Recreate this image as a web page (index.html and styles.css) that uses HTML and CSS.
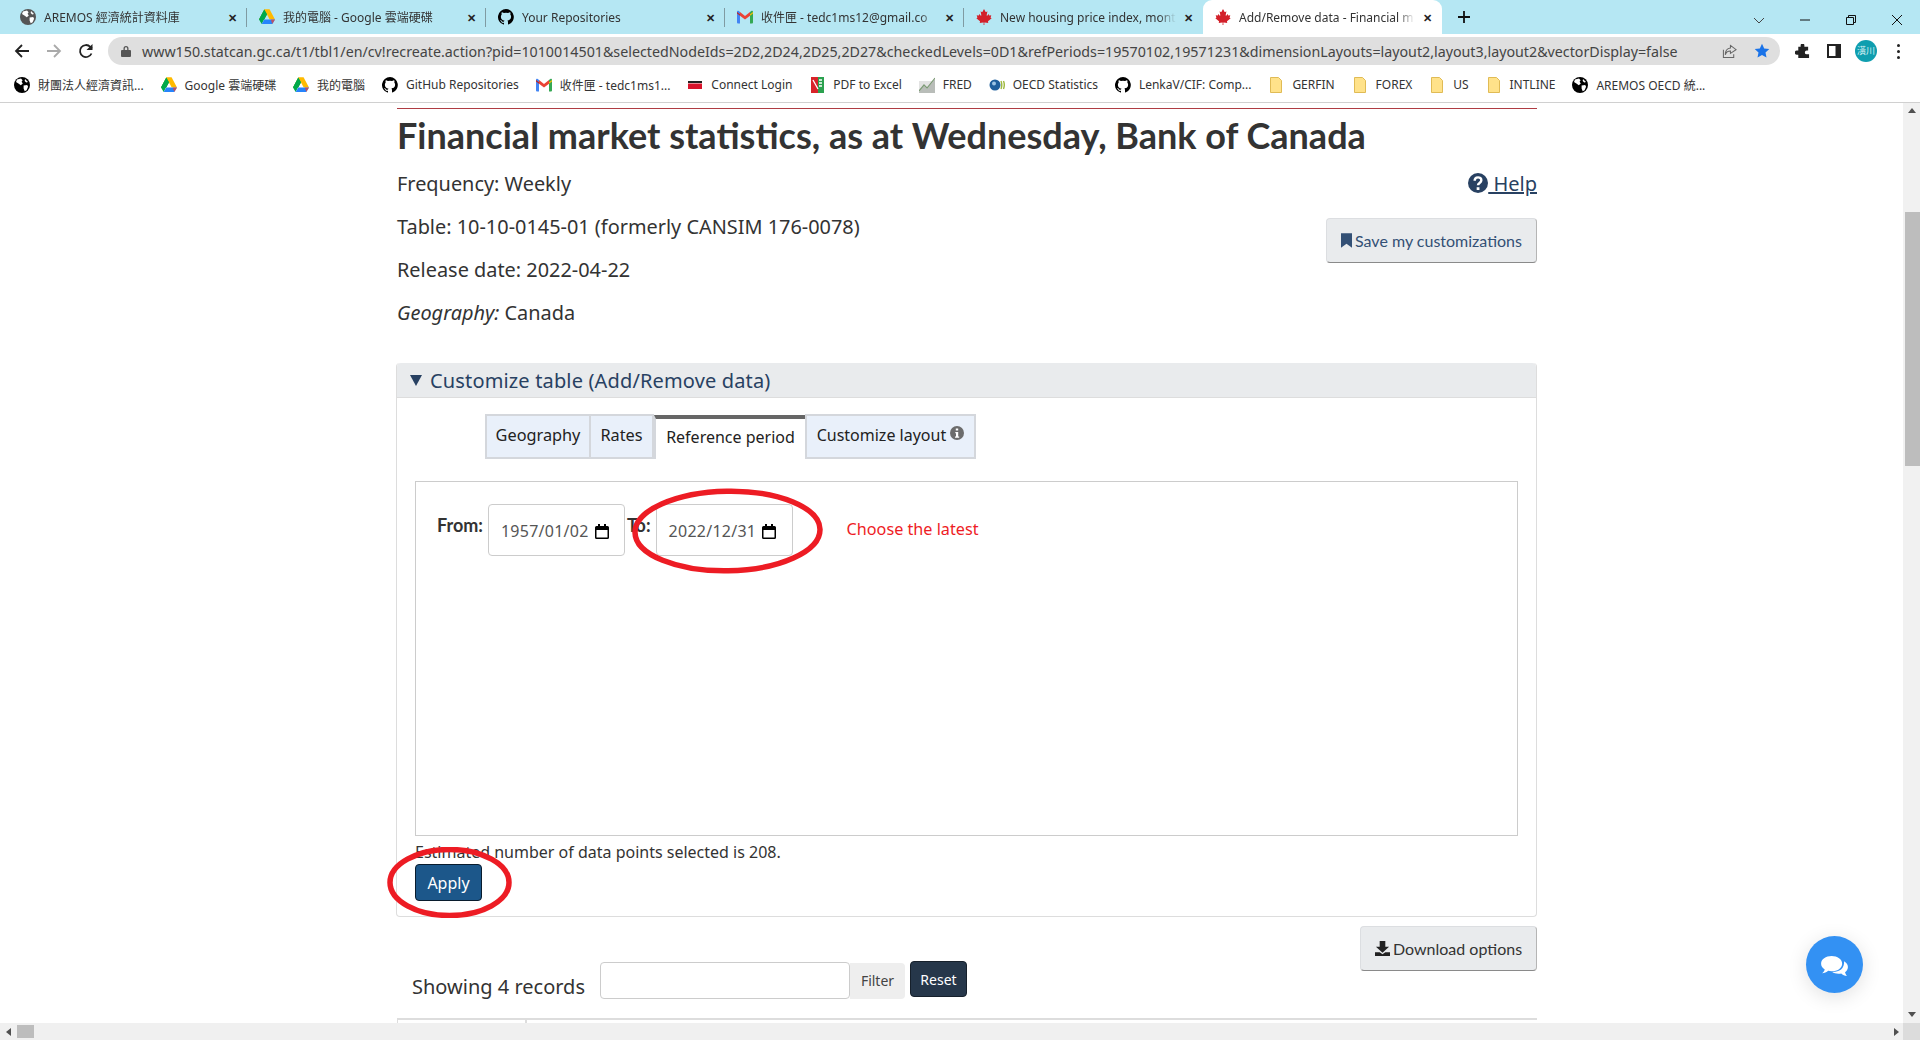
FILE: index.html

```html
<!DOCTYPE html>
<html lang="en">
<head>
    <meta charset="UTF-8">
    <title>Add/Remove data - Financial market statistics</title>
    <link rel="stylesheet" href="styles.css">
</head>
<body>
    <svg class="defs" width="0" height="0">
        <symbol id="globe" viewBox="0 0 16 16">
            <circle cx="8" cy="8" r="8"/>
            <path fill="#fff" d="M3 2.6 7 1.5l1.6 1.7-1 1.6 1.2 1.6-2 1.9-2.4-1.7L2 5zM9.6 8.6l3.6-.6.9 1.8-1.5 3.4-1.9 1-1.1-2.6zM11 1.9l3 3-1.8.5-1.5-1.4z"/>
        </symbol>
        <symbol id="drive" viewBox="0 0 16 15">
            <path fill="#ffba00" d="M5.3 0h5.4l-2.7 4.8-3 5.2H0z"/>
            <path fill="#00a94b" d="M5.3 0 8 4.7 5 10 2.7 14.6 0 10z"/>
            <path fill="#ffba00" d="M10.7 0 16 10h-5.3L5.4 0z"/>
            <path fill="#00a94b" d="M5.3 0 8 4.8 5.3 10H0z"/>
            <path fill="#2684fc" d="M5.3 10H16l-2.7 4.6H2.7z"/>
            <path fill="#ea4335" d="M13.3 14.6 16 10h-4.2z" opacity=".75"/>
        </symbol>
        <symbol id="github" viewBox="0 0 16 16">
            <path d="M8 0a8 8 0 0 0-2.5 15.6c.4.1.5-.2.5-.4v-1.4c-2.2.5-2.7-1-2.7-1-.4-.9-.9-1.2-.9-1.2-.7-.5.1-.5.1-.5.8.1 1.2.8 1.2.8.7 1.2 1.9.9 2.3.7.1-.5.3-.9.5-1.1-1.8-.2-3.6-.9-3.6-4 0-.9.3-1.6.8-2.1-.1-.2-.4-1 .1-2.1 0 0 .7-.2 2.2.8a7.600 7.600 0 0 1 4 0c1.500-1 2.200-.8 2.200-.8.500 1.100.200 1.900.100 2.100.500.600.800 1.300.800 2.100 0 3.100-1.900 3.700-3.700 3.900.300.300.600.800.600 1.500v2.200c0 .200.100.500.600.400A8 8 0 0 0 8 0z"/>
        </symbol>
        <symbol id="gmail" viewBox="0 0 16 13">
            <path fill="#4285f4" d="M0 1.500C0 .6.900 0 1.700.5L3 1.500V13H1a1 1 0 0 1-1-1z"/>
            <path fill="#34a853" d="M13 1.500 14.300.5c.8-.5 1.700.1 1.700 1V12a1 1 0 0 1-1 1h-2z"/>
            <path fill="#ea4335" d="M3 1.500 8 5.400l5-3.900v3.700L8 9 3 5.200z"/>
            <path fill="#c5221f" d="M0 1.500 3 3.800v1.400L0 3z"/>
            <path fill="#fbbc04" d="m16 1.500-3 2.300v1.400L16 3z"/>
        </symbol>
        <symbol id="leaf" viewBox="0 0 16 16">
            <path fill="#d3202a" d="M8 0 6.500 2.800c-.2.300-.5.300-.8.100L4.600 2.300l.7 3.800c.1.600-.3.800-.7.400L3.200 5l-.3 1.300c0 .2-.2.300-.4.300L.7 6.200l.6 2c.1.400 0 .6-.3.700l-.7.300 3.400 2.800c.3.300.4.500.3.900l-.3 1 3.500-.4c.3 0 .5.100.5.400l-.2 2.500h1l-.2-2.500c0-.3.200-.4.500-.4l3.500.4-.3-1c-.1-.4 0-.6.300-.9l3.400-2.800-.7-.3c-.3-.1-.4-.3-.3-.7l.6-2-1.800.4c-.2 0-.4-.1-.4-.3L12.800 5l-1.400 1.500c-.4.400-.8.200-.7-.4l.7-3.800-1.100.6c-.3.200-.6.200-.8-.1z"/>
        </symbol>
        <symbol id="folder" viewBox="0 0 12 16">
            <path fill="#ffe28a" stroke="#e0bb55" d="M.5.5h8l3 3v12H.5z"/>
        </symbol>
        <symbol id="calendar" viewBox="0 0 14 15">
            <path d="M3 0h2v2h4V0h2v2h1.500A1.500 1.500 0 0 1 14 3.500v10a1.500 1.500 0 0 1-1.500 1.500h-11A1.500 1.500 0 0 1 0 13.500v-10A1.500 1.500 0 0 1 1.500 2H3zM1.500 6v7.500h11V6z"/>
        </symbol>
    </svg>

    <div class="tabstrip">
        <div class="tab"><svg class="tab-icon globe-gray"><use href="#globe"/></svg><span class="tab-title">AREMOS 經濟統計資料庫</span><span class="tab-close">✕</span></div>
        <div class="tab"><svg class="tab-icon"><use href="#drive"/></svg><span class="tab-title">我的電腦 - Google 雲端硬碟</span><span class="tab-close">✕</span></div>
        <div class="tab"><svg class="tab-icon"><use href="#github"/></svg><span class="tab-title">Your Repositories</span><span class="tab-close">✕</span></div>
        <div class="tab"><svg class="tab-icon"><use href="#gmail"/></svg><span class="tab-title">收件匣 - tedc1ms12@gmail.co</span><span class="tab-close">✕</span></div>
        <div class="tab tab-before-active"><svg class="tab-icon"><use href="#leaf"/></svg><span class="tab-title">New housing price index, mont</span><span class="tab-close">✕</span></div>
        <div class="tab tab-active"><svg class="tab-icon"><use href="#leaf"/></svg><span class="tab-title">Add/Remove data - Financial m</span><span class="tab-close">✕</span></div>
        <svg class="new-tab" viewBox="0 0 14 14"><path d="M7 1v12M1 7h12" stroke="#111" stroke-width="1.800"/></svg>
        <div class="window-controls">
            <svg viewBox="0 0 12 12"><path d="M1 4l5 5 5-5" fill="none" stroke="#444"/></svg>
            <svg viewBox="0 0 12 12"><path d="M1 6h10" stroke="#111"/></svg>
            <svg viewBox="0 0 12 12"><path d="M1.500 3.500h7v7h-7zM3.500 3.500v-2h7v7h-2" fill="none" stroke="#111"/></svg>
            <svg viewBox="0 0 12 12"><path d="M1 1l10 10M11 1 1 11" stroke="#111"/></svg>
        </div>
    </div>

    <div class="toolbar">
        <svg class="nav-icon" viewBox="0 0 16 16"><path d="M15 8H2M8 2 2 8l6 6" fill="none" stroke="#222" stroke-width="1.800"/></svg>
        <svg class="nav-icon" viewBox="0 0 16 16"><path d="M1 8h13M8 2l6 6-6 6" fill="none" stroke="#aaa" stroke-width="1.800"/></svg>
        <svg class="nav-icon" viewBox="0 0 16 16"><path d="M13.500 10.500A6 6 0 1 1 12.300 3.800L14 5.500" fill="none" stroke="#222" stroke-width="1.800"/><path d="M14.500 1v6h-6z" fill="#222"/></svg>
        <div class="omnibox">
            <svg class="lock" viewBox="0 0 10 12"><path d="M2.500 5V3.500a2.500 2.500 0 0 1 5 0V5H9a1 1 0 0 1 1 1v5a1 1 0 0 1-1 1H1a1 1 0 0 1-1-1V6a1 1 0 0 1 1-1zM3.800 5h2.400V3.500a1.200 1.200 0 0 0-2.400 0z" fill="#555"/></svg>
            <span class="url">www150.statcan.gc.ca/t1/tbl1/en/cv!recreate.action?pid=1010014501&amp;selectedNodeIds=2D2,2D24,2D25,2D27&amp;checkedLevels=0D1&amp;refPeriods=19570102,19571231&amp;dimensionLayouts=layout2,layout3,layout2&amp;vectorDisplay=false</span>
            <svg class="share" viewBox="0 0 16 16"><path d="M9 1.500 15 6l-6 4V7.500C6 7.500 4.300 9 3.500 11.500 3.500 7.500 5.500 4.700 9 4.300zM1.500 6v8.500h11V11" fill="none" stroke="#666" stroke-width="1.100"/></svg>
            <svg class="star" viewBox="0 0 16 16"><path d="m8 .8 2.200 4.700 5.100.6-3.800 3.500 1 5-4.500-2.500-4.500 2.500 1-5L.7 6.100l5.100-.6z" fill="#1a73e8"/></svg>
        </div>
        <svg class="puzzle" viewBox="0 0 16 16"><path d="M6 1.500a2 2 0 0 1 4 0V3h4v4h-1.500a2 2 0 0 0 0 4H15v4H3.500v-3.500H2a2.200 2.200 0 0 1 0-4.500h1.500V3H6z" fill="#222"/></svg>
        <svg class="side-panel" viewBox="0 0 14 14"><path d="M0 0h14v14H0zM2 2v10h6.500V2z" fill="#222" fill-rule="evenodd"/></svg>
        <div class="avatar">潢川</div>
        <div class="menu-dots"><i></i><i></i><i></i></div>
    </div>

    <div class="bookmarks">
        <div class="bookmark"><svg><use href="#globe"/></svg>財團法人經濟資訊...</div>
        <div class="bookmark"><svg><use href="#drive"/></svg>Google 雲端硬碟</div>
        <div class="bookmark"><svg><use href="#drive"/></svg>我的電腦</div>
        <div class="bookmark"><svg><use href="#github"/></svg>GitHub Repositories</div>
        <div class="bookmark"><svg><use href="#gmail"/></svg>收件匣 - tedc1ms1...</div>
        <div class="bookmark"><svg viewBox="0 0 16 16"><path d="M1 4h14v2H1z" fill="#222"/><path d="M1 6.500h14V12H1z" fill="#d8132b"/></svg>Connect Login</div>
        <div class="bookmark"><svg viewBox="0 0 16 16"><path d="M2 0h7v16H2z" fill="#d8232a"/><path d="M9 0h6v16H9z" fill="#2ba14f"/><path d="M4 3l5 9M10 3h3M10 6h3M10 9h3" stroke="#fff" stroke-width="1.300"/></svg>PDF to Excel</div>
        <div class="bookmark"><svg viewBox="0 0 16 16"><path d="M0 4h16v12H0z" fill="#e3e3e3"/><path d="M0 15 5 9l3 3 8-10v14H0z" fill="#b9bdb9"/><path d="M0 14 5 8l3 3 8-10" fill="none" stroke="#7d9a76" stroke-width="1.200"/></svg>FRED</div>
        <div class="bookmark"><svg viewBox="0 0 16 16"><circle cx="6" cy="8" r="5.500" fill="#1f5f9c"/><circle cx="5" cy="6.500" r="2" fill="#9cc4e4"/><path d="M12 4q1.600 4 0 8M14.500 4q1.600 4 0 8" fill="none" stroke="#9db83c" stroke-width="1.400"/></svg>OECD Statistics</div>
        <div class="bookmark"><svg><use href="#github"/></svg>LenkaV/CIF: Comp...</div>
        <div class="bookmark"><svg><use href="#folder"/></svg>GERFIN</div>
        <div class="bookmark"><svg><use href="#folder"/></svg>FOREX</div>
        <div class="bookmark"><svg><use href="#folder"/></svg>US</div>
        <div class="bookmark"><svg><use href="#folder"/></svg>INTLINE</div>
        <div class="bookmark"><svg><use href="#globe"/></svg>AREMOS OECD 統...</div>
    </div>

    <div class="viewport">
        <main class="page">
            <div class="content">
                <h1>Financial market statistics, as at Wednesday, Bank of Canada</h1>
                <div class="table-info">
                    <div class="info-text">
                        <p>Frequency: Weekly</p>
                        <p>Table: 10-10-0145-01 (formerly CANSIM 176-0078)</p>
                        <p>Release date: 2022-04-22</p>
                        <p><em>Geography:</em> Canada</p>
                    </div>
                    <div class="info-actions">
                        <a class="help-link" href="#"><svg viewBox="0 0 18 18"><circle cx="9" cy="9" r="9" fill="#284162"/><path d="M6 7c0-4 6-4 6-.5 0 2.500-3 2.300-3 4.500" fill="none" stroke="#fff" stroke-width="2.200"/><path d="M7.800 12.800h2.500v2.500H7.800z" fill="#fff"/></svg> Help</a>
                        <button class="btn-default btn-save"><svg viewBox="0 0 12 16"><path d="M0 0h12v16L6 11.500 0 16z" fill="#335075"/></svg>Save my customizations</button>
                    </div>
                </div>

                <section class="panel">
                    <h2 class="panel-title"><span class="caret"></span>Customize table (Add/Remove data)</h2>
                    <div class="panel-body">
                        <div class="tabs">
                            <div class="tab-btn tab-geo">Geography</div>
                            <div class="tab-btn tab-rates">Rates</div>
                            <div class="tab-btn tab-current">Reference period</div>
                            <div class="tab-btn tab-layout">Customize layout <svg viewBox="0 0 14 14"><circle cx="7" cy="7" r="7" fill="#6c6c6c"/><path d="M5.800 2.500h2.400v2H5.800zM5.300 6h2.900v4.500h1v1.200H5v-1.200h1V7.200h-.7z" fill="#fff"/></svg></div>
                        </div>
                        <div class="tab-pane">
                            <div class="date-row">
                                <label class="date-label">From:</label>
                                <div class="date-input">1957/01/02<svg><use href="#calendar"/></svg></div>
                                <label class="date-label label-to">To:</label>
                                <div class="date-input">2022/12/31<svg><use href="#calendar"/></svg></div>
                                <span class="date-note">Choose the latest</span>
                            </div>
                        </div>
                        <p class="estimate">Estimated number of data points selected is 208.</p>
                        <button class="btn-apply">Apply</button>
                    </div>
                </section>

                <button class="btn-default btn-download"><svg viewBox="0 0 16 16"><path d="M5 0h6v6h4l-7 6.500L1 6h4z" fill="#222"/><path d="M0 12h5l3 2 3-2h5v4H0z" fill="#222"/></svg>Download options</button>
                <div class="filter-row">
                    <span class="records">Showing 4 records</span>
                    <div class="filter-input"></div>
                    <div class="btn-filter">Filter</div>
                    <button class="btn-reset">Reset</button>
                </div>
                <div class="results-table"><span class="results-col"></span></div>
            </div>
            <button class="chat-btn"><svg viewBox="0 0 30 24"><path d="M12 1c6 0 11 3.400 11 8s-5 8-11 8c-1.300 0-2.500-.2-3.600-.5C6.800 18 4.500 18.800 2 19c1.500-1 2.500-2.500 2.800-4C2.500 13.500 1 11.400 1 9c0-4.600 5-8 11-8z" fill="#fff"/><path d="M25 6.500c2.500 1.400 4 3.500 4 6 0 2.200-1.200 4.100-3 5.500.3 1.400 1.200 2.800 2 4-2.300-.3-4.500-1.300-6-2.700-1 .2-2 .3-3 .2-2.500 0-4.700-.7-6.400-1.800 6.800.3 13-3.200 12.400-11.200z" fill="#fff"/></svg></button>
        </main>
        <div class="vscroll">
            <span class="arrow-up"></span>
            <span class="vthumb"></span>
            <span class="arrow-down"></span>
        </div>
        <div class="hscroll">
            <span class="arrow-left"></span>
            <span class="hthumb"></span>
            <span class="arrow-right"></span>
        </div>
        <div class="scroll-corner"></div>
    </div>

    <svg class="oval oval-date" viewBox="0 0 191 86"><ellipse cx="95.500" cy="43" rx="92.500" ry="39.800" fill="none" stroke="#ed1c24" stroke-width="5.500" transform="rotate(-1 95.500 43)"/></svg>
    <svg class="oval oval-apply" viewBox="0 0 125 71"><ellipse cx="62.500" cy="35.500" rx="59.500" ry="33" fill="none" stroke="#ed1c24" stroke-width="5.500"/></svg>
</body>
</html>
```

FILE: styles.css

```css
* {
    margin: 0;
    padding: 0;
    box-sizing: border-box;
}
body {
    width: 1920px;
    height: 1040px;
    overflow: hidden;
    position: relative;
    background: #fff;
    font-family: "Noto Sans", "Noto Sans CJK TC", sans-serif;
    color: #333;
}
.defs {
    position: absolute;
}

/* browser tabs */
.tabstrip {
    display: flex;
    align-items: flex-end;
    height: 34px;
    padding-left: 8px;
    background: #b5e7f3;
}
.tab {
    display: flex;
    align-items: center;
    position: relative;
    width: 239px;
    height: 34px;
    padding: 0 7px 0 12px;
    font-size: 12px;
    color: #333;
}
.tab::after {
    content: "";
    position: absolute;
    right: 0;
    top: 8px;
    height: 19px;
    border-right: 1px solid #7f9ba2;
}
.tab-before-active::after,
.tab-active::after {
    display: none;
}
.tab-active {
    background: #fff;
    border-radius: 9px 9px 0 0;
}
.tab-icon {
    flex: none;
    width: 16px;
    height: 16px;
    margin-right: 8px;
}
.globe-gray {
    fill: #555;
}
.tab-title {
    flex: 1;
    overflow: hidden;
    white-space: nowrap;
    -webkit-mask-image: linear-gradient(to right, #000 90%, transparent);
    mask-image: linear-gradient(to right, #000 90%, transparent);
}
.tab-close {
    flex: none;
    width: 16px;
    margin-left: 4px;
    font-size: 11px;
    font-weight: bold;
    text-align: center;
    color: #222;
}
.new-tab {
    width: 14px;
    height: 14px;
    margin: 0 0 10px 15px;
}
.window-controls {
    display: flex;
    gap: 34px;
    margin-left: auto;
    margin-right: 17px;
    margin-bottom: 8px;
}
.window-controls svg {
    width: 12px;
    height: 12px;
}

/* browser toolbar */
.toolbar {
    display: flex;
    align-items: center;
    height: 34px;
    padding-left: 14px;
}
.nav-icon {
    width: 16px;
    height: 16px;
    margin-right: 16px;
}
.omnibox {
    display: flex;
    align-items: center;
    width: 1672px;
    height: 28px;
    margin-left: -2px;
    padding-left: 13px;
    background: #dfdfdf;
    border-radius: 14px;
}
.lock {
    width: 10px;
    height: 12px;
    margin-right: 11px;
}
.url {
    width: 1580px;
    font-size: 14.260px;
    white-space: nowrap;
    color: #444;
}
.share {
    width: 15px;
    height: 15px;
    margin-right: 17px;
}
.star {
    width: 16px;
    height: 16px;
}
.puzzle {
    width: 15px;
    height: 15px;
    margin-left: 15px;
}
.side-panel {
    width: 14px;
    height: 14px;
    margin-left: 17px;
}
.avatar {
    width: 22px;
    height: 22px;
    margin-left: 14px;
    border-radius: 50%;
    background: #0f9eaf;
    color: #d9f1f4;
    font-size: 9px;
    line-height: 22px;
    text-align: center;
}
.menu-dots {
    display: flex;
    flex-direction: column;
    gap: 3px;
    margin-left: 20px;
}
.menu-dots i {
    width: 3px;
    height: 3px;
    border-radius: 50%;
    background: #222;
}

/* bookmarks bar */
.bookmarks {
    display: flex;
    align-items: center;
    gap: 16.900px;
    height: 35px;
    padding-left: 14px;
    padding-bottom: 1px;
    border-bottom: 1px solid #d0d0d0;
    font-size: 12px;
    color: #333;
    white-space: nowrap;
}
.bookmark {
    display: flex;
    align-items: center;
    gap: 8px;
}
.bookmark svg {
    width: 16px;
    height: 16px;
}

/* page area */
.viewport {
    display: grid;
    grid-template-columns: 1fr 17px;
    grid-template-rows: 920px 17px;
    position: relative;
    height: 937px;
}
.page {
    overflow: hidden;
    position: relative;
}
.content {
    width: 1140px;
    margin-left: 397px;
    margin-top: 5px;
    border-top: 1px solid #af3c43;
}
h1 {
    font-family: Lato, sans-serif;
    font-size: 36px;
    font-weight: 700;
    line-height: 52px;
    color: #333;
}
.table-info {
    display: flex;
    justify-content: space-between;
    margin-top: 9px;
}
.info-text {
    font-size: 19.900px;
    line-height: 28px;
}
.info-text p {
    margin-bottom: 15px;
}
.info-actions {
    display: flex;
    flex-direction: column;
    align-items: flex-end;
}
.help-link {
    display: block;
    font-size: 20px;
    line-height: 28px;
    color: #284162;
}
.help-link svg {
    width: 20px;
    height: 20px;
    vertical-align: -2px;
}
.btn-default {
    display: flex;
    align-items: center;
    background: #e9ebed;
    border: 1px solid #dcdee1;
    border-bottom-color: #8a8a8a;
    border-right-color: #b5b5b5;
    border-radius: 4px;
    font-family: Lato, sans-serif;
    font-size: 16px;
}
.btn-save {
    width: 211px;
    height: 45px;
    margin-top: 20px;
    padding-left: 14px;
    color: #335075;
}
.btn-save svg {
    width: 11px;
    height: 15px;
    margin-right: 3px;
}

.panel {
    width: 1141px;
    margin: 21px 0 0 -1px;
    border: 1px solid #ddd;
    border-top: 0;
    border-radius: 4px;
}
.panel-title {
    display: flex;
    align-items: center;
    height: 35px;
    padding-left: 13px;
    background: #e9ebed;
    border-radius: 4px 4px 0 0;
    border-bottom: 1px solid #ddd;
    font-size: 20px;
    font-weight: 400;
    color: #284162;
    letter-spacing: .15px;
}
.caret {
    width: 0;
    height: 0;
    margin-right: 8px;
    border-left: 6px solid transparent;
    border-right: 6px solid transparent;
    border-top: 11px solid #284162;
}
.panel-body {
    padding: 16px 18px 15px 18px;
}
.tabs {
    display: flex;
    height: 45px;
    margin-left: 70px;
    font-size: 16.300px;
    color: #222;
}
.tab-btn {
    height: 45px;
    line-height: 39px;
    text-align: center;
    background: #e9f0fa;
    border: 2px solid #d4d7dc;
}
.tab-geo {
    width: 106px;
}
.tab-rates {
    width: 63px;
    border-left: 0;
}
.tab-current {
    width: 151px;
    height: 44px;
    margin-top: 1px;
    font-size: 16px;
    line-height: 36px;
    background: #fff;
    border: 0;
    border-top: 4px solid #666;
    border-left: 2px solid #d4d7dc;
}
.tab-layout {
    width: 171px;
    font-size: 16px;
}
.tab-layout svg {
    width: 14px;
    height: 14px;
    vertical-align: 1px;
}
.tab-pane {
    height: 355px;
    margin-top: 22px;
    padding: 22px 21px;
    border: 1px solid #ccc;
}
.date-row {
    display: flex;
    align-items: flex-start;
}
.date-label {
    font-family: Lato, "Noto Sans", sans-serif;
    font-size: 18px;
    font-weight: 700;
    line-height: 43px;
    color: #333;
}
.date-input {
    display: flex;
    align-items: center;
    gap: 6px;
    width: 137px;
    height: 52px;
    margin-left: 5px;
    padding: 2px 0 0 12px;
    background: #fff;
    border: 1px solid #ccc;
    border-radius: 4px;
    font-size: 16px;
    letter-spacing: .25px;
    color: #555;
}
.date-input svg {
    width: 14px;
    height: 15px;
    flex: none;
}
.label-to {
    margin-left: 2px;
}
.date-note {
    margin-left: 54px;
    font-size: 16.200px;
    line-height: 50px;
    color: #ee1c25;
}
.estimate {
    margin-top: 4px;
    font-size: 16px;
    line-height: 24px;
}
.btn-apply {
    display: block;
    width: 67px;
    height: 37px;
    background: #1c578a;
    border: 1px solid #091c2d;
    border-radius: 4px;
    font-family: "Noto Sans", sans-serif;
    font-size: 16px;
    color: #fff;
}
.btn-download {
    float: right;
    width: 177px;
    height: 45px;
    margin-top: 9px;
    padding-left: 14px;
    color: #333;
}
.btn-download svg {
    width: 15px;
    height: 15px;
    margin-right: 3px;
}
.filter-row {
    display: flex;
    align-items: flex-start;
    padding: 44px 0 0 15px;
}
.records {
    margin-top: 12px;
    font-size: 20px;
    line-height: 28px;
}
.filter-input {
    width: 250px;
    height: 37px;
    margin: 1px 0 0 15px;
    border: 1px solid #ccc;
    border-radius: 4px;
}
.btn-filter {
    width: 55px;
    height: 36px;
    margin-top: 2px;
    background: #eee;
    border-radius: 0 4px 4px 0;
    font-size: 14px;
    line-height: 36px;
    text-align: center;
    color: #444;
}
.btn-reset {
    width: 57px;
    height: 36px;
    margin-left: 5px;
    background: #26374a;
    border: 1px solid #16202b;
    border-radius: 4px;
    font-family: "Noto Sans", sans-serif;
    font-size: 14px;
    color: #fff;
}
.results-table {
    height: 6px;
    margin-top: 17px;
    border-top: 2px solid #ddd;
    border-left: 1px solid #ddd;
}
.results-col {
    display: block;
    width: 129px;
    height: 6px;
    border-right: 2px solid #ddd;
}
.chat-btn {
    position: absolute;
    left: 1806px;
    top: 833px;
    width: 57px;
    height: 57px;
    background: #3391f3;
    border: 0;
    border-radius: 50%;
    box-shadow: 0 4px 20px rgba(0, 0, 0, .12);
}
.chat-btn svg {
    display: block;
    width: 29px;
    height: 23px;
    margin: 3px auto 0;
}

/* scrollbars */
.vscroll {
    display: flex;
    flex-direction: column;
    align-items: center;
    background: #f1f1f1;
}
.vthumb {
    width: 15px;
    height: 254px;
    margin: 99px 0 0 2px;
    background: #bdbdbd;
}
.arrow-up,
.arrow-down,
.arrow-left,
.arrow-right {
    width: 0;
    height: 0;
    border: 4px solid transparent;
}
.arrow-up {
    margin-top: 5px;
    border-bottom: 5px solid #505050;
    border-top: 0;
}
.arrow-down {
    margin-top: auto;
    margin-bottom: 6px;
    border-top: 5px solid #505050;
    border-bottom: 0;
}
.hscroll {
    display: flex;
    align-items: center;
    padding-left: 6px;
    background: #f0f0f0;
}
.arrow-left {
    border-right: 5px solid #505050;
    border-left: 0;
}
.hthumb {
    width: 17px;
    height: 13px;
    margin-left: 6px;
    background: #bdbdbd;
}
.arrow-right {
    margin-left: auto;
    margin-right: 4px;
    border-left: 5px solid #505050;
    border-right: 0;
}
.scroll-corner {
    background: #dcdcdc;
}

/* red hand drawn circles over the screenshot */
.oval {
    position: absolute;
    pointer-events: none;
}
.oval-date {
    left: 632px;
    top: 488px;
    width: 191px;
    height: 86px;
}
.oval-apply {
    left: 387px;
    top: 847px;
    width: 125px;
    height: 71px;
}
```
